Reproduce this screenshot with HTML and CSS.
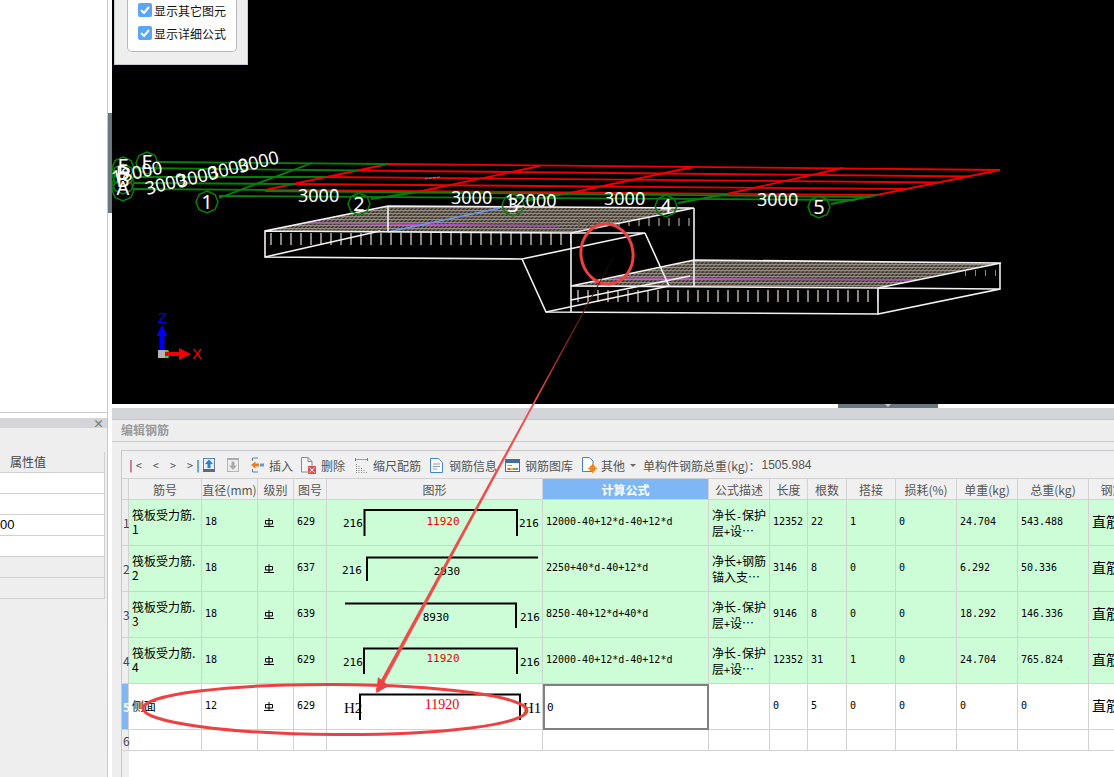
FILE: index.html
```html
<!DOCTYPE html>
<html lang="zh">
<head>
<meta charset="utf-8">
<title>编辑钢筋</title>
<link rel="stylesheet" href="styles.css">
</head>
<body>
<svg class="defs" width="0" height="0">
  <defs>
    <symbol id="rebar" viewBox="0 0 10 10"><path d="M1.500 2.500h7v3.500h-7zM5 0v8.500M0 8.500h10" fill="none" stroke="#000" stroke-width="1"/></symbol>
    <symbol id="bubble" viewBox="-12 -12 24 24"><path d="M0-11 8-7.500 11 0 8 7.500 0 11-8 7.500-11 0-8-7.500Z" fill="none" stroke="#0a800a" stroke-width="1.500"/></symbol>
    <pattern id="mesh" width="4" height="3" patternUnits="userSpaceOnUse" patternTransform="skewX(-40)">
      <rect width="4" height="3" fill="#3a342e"/>
      <path d="M0 .5H4M1 0V3" stroke="#a0968a" stroke-width="1"/>
    </pattern>
    <linearGradient id="fade" gradientUnits="userSpaceOnUse" x1="613" y1="257" x2="534" y2="400">
      <stop offset="0" stop-color="#2a0a0a"/>
      <stop offset=".35" stop-color="#5a1818"/>
      <stop offset=".75" stop-color="#a83030"/>
      <stop offset="1" stop-color="#f04a4a"/>
    </linearGradient>
  </defs>
</svg>

<aside class="left">
  <div class="left-top"></div>
  <section class="props">
    <div class="props-title"><span class="props-close">×</span></div>
    <div class="props-space"></div>
    <div class="props-table">
      <div class="props-head">属性值</div>
      <div class="props-row"></div>
      <div class="props-row"></div>
      <div class="props-row">00</div>
      <div class="props-row"></div>
      <div class="props-row props-row-dim"></div>
      <div class="props-row props-row-dim"></div>
    </div>
  </section>
</aside>

<main class="main">
  <div class="viewport">
    <svg class="scene" width="1002" height="404" viewBox="112 0 1002 404">
      <!-- red plan grid -->
      <g class="g-red">
        <path d="M388 164L1000 170L877 195L265 190Z"/>
        <path d="M357 170.500L970 176.500M326 177L939 182.500M296 184L908 189"/>
        <path d="M540 166L417 192M693 167L570 193M843 168L727 194"/>
      </g>
      <!-- green axis lines -->
      <g class="g-green">
        <path d="M158 162L388 164M134 168L357 170.500M134 177L326 177M134 183L296 184M134 189L265 190"/>
        <path d="M265 191L870 197M219 196L855 200"/>
        <path d="M219 198L312 163M371 199L418 192M525 201L570 193M678 203L727 194M831 204L877 195"/>
      </g>
      <path class="speck" d="M425 179L440 177"/>
      <!-- slabs -->
      <path class="mesh" d="M388 206L694 208L571 233L265 231Z"/>
      <path class="mesh" d="M694 260L1001 263L878 288L571 286Z"/>
      <path class="p-line" d="M305 223L557 226M613 278L913 280"/>
      <path class="b-line" d="M388 232L500 208"/>
      <path class="ticks" d="M270 239H571M577 296H878"/>
      <path class="ticks-side" d="M965 273L998 273"/>
      <path class="ticks-back" d="M578 222L694 222"/>
      <g class="g-white">
        <path d="M265 231L571 233L694 208L388 206L265 231V257L522 259"/>
        <path d="M265 257L380 231M388 206V232"/>
        <path d="M694 208V287M571 233V312"/>
        <path d="M522 259L645 233H571M522 259L546 312L878 314M645 233L669 286"/>
        <path d="M546 312L669 286M571 300L690 276"/>
        <path d="M571 286L694 260L1001 263L878 288Z"/>
        <path d="M878 288V314L1000 289V263M878 288L1000 289"/>
      </g>
      <!-- axis bubbles and dimensions -->
      <use href="#bubble" x="135" y="151" width="24" height="24"/>
      <use href="#bubble" x="111" y="156" width="24" height="24"/>
      <use href="#bubble" x="111" y="163" width="24" height="24"/>
      <use href="#bubble" x="111" y="171" width="24" height="24"/>
      <use href="#bubble" x="111" y="178" width="24" height="24"/>
      <use href="#bubble" x="195" y="190" width="24" height="24"/>
      <use href="#bubble" x="347" y="192" width="24" height="24"/>
      <use href="#bubble" x="501" y="193" width="24" height="24"/>
      <use href="#bubble" x="654" y="194" width="24" height="24"/>
      <use href="#bubble" x="807" y="195" width="24" height="24"/>
      <g class="t-axis">
        <text x="147" y="169">E</text>
        <text x="123" y="173">E</text>
        <text x="123" y="180">D</text>
        <text x="123" y="187">B</text>
        <text x="123" y="195">A</text>
        <text x="207" y="209">1</text>
        <text x="359" y="211">2</text>
        <text x="513" y="212">3</text>
        <text x="666" y="213">4</text>
        <text x="819" y="214">5</text>
      </g>
      <g class="t-dim">
        <text x="298" y="202">3000</text>
        <text x="451" y="204">3000</text>
        <text x="505" y="207">12000</text>
        <text x="604" y="205">3000</text>
        <text x="757" y="206">3000</text>
        <text transform="translate(113 184) rotate(-12)">18000</text>
        <text transform="translate(147 195) rotate(-14)">3000</text>
        <text transform="translate(179 188) rotate(-14)">3000</text>
        <text transform="translate(210 180) rotate(-14)">3000</text>
        <text transform="translate(240 173) rotate(-14)">3000</text>
      </g>
      <!-- axis gizmo -->
      <path class="ax-g" d="M165 350h3l2 3v2l-2 3h-3z"/>
      <rect class="ax-s" x="158" y="350" width="7" height="8"/>
      <path class="ax-z" d="M159.500 350V336H156.500L162 325L167.500 336H164.500V350Z"/>
      <path class="ax-x" d="M165 352H179V348L191 354L179 360V356H165Z"/>
      <text class="ax-zt" x="158" y="323">Z</text>
      <text class="ax-xt" x="192" y="359">X</text>
    </svg>
    <div class="options">
      <div class="options-box">
        <label class="check"><span class="tick"><svg width="10" height="8" viewBox="0 0 10 8"><path d="M1 4L4 7L9 1" fill="none" stroke="#fff" stroke-width="2"/></svg></span>显示其它图元</label>
        <label class="check"><span class="tick"><svg width="10" height="8" viewBox="0 0 10 8"><path d="M1 4L4 7L9 1" fill="none" stroke="#fff" stroke-width="2"/></svg></span>显示详细公式</label>
      </div>
    </div>
    <div class="grip-left"></div>
  </div>

  <div class="strip"><div class="grip-bottom"></div></div>
  <div class="titlebar"></div>
  <div class="panelhead">编辑钢筋</div>

  <div class="workspace">
    <div class="sheet">
      <div class="toolbar">
        <div class="nav"><b class="bar-p">|</b>&lt;<span class="nav-sp">&lt;</span><span class="nav-sp">&gt;</span><span class="nav-sp">&gt;</span><b class="bar-b">|</b></div>
        <svg class="ml11" width="12" height="14" viewBox="0 0 12 14"><rect x=".5" y=".5" width="11" height="13" fill="#e6edf4" stroke="#5d86ad"/><rect y="11" width="12" height="3" fill="#5f6b76"/><path d="M6 1.500L10 6H7.500V10H4.500V6H2Z" fill="#2a7fd0"/></svg>
        <svg class="ml12" width="12" height="14" viewBox="0 0 12 14"><rect x=".5" y=".5" width="11" height="13" fill="#eee" stroke="#b4b4b4"/><rect width="12" height="2" fill="#aaa"/><path d="M6 12L10 7.500H7.500V3.500H4.500V7.500H2Z" fill="#aaa"/></svg>
        <svg class="ml12" width="13" height="16" viewBox="0 0 13 16"><path d="M7 1H1.500V4M1.500 12V15H7" fill="none" stroke="#5a7fa5"/><path d="M0 8L4.500 4.500V6.500H8V9.500H4.500V11.500Z" fill="#e87d22"/><rect x="9" y="6.500" width="4" height="3" fill="#5a9ad8"/></svg>
        <span class="tool-t ml5">插入</span>
        <svg class="ml8" width="15" height="17" viewBox="0 0 15 17"><path d="M.5.500H7L11 4.500V15H.5Z" fill="#f4f4f4" stroke="#8a8a8a"/><path d="M7 .5V4.500H11" fill="none" stroke="#8a8a8a"/><rect x="7" y="9" width="8" height="8" fill="#e05050"/><path d="M8.500 10.500L13.500 15.500M13.500 10.500L8.500 15.500" stroke="#fff"/></svg>
        <span class="tool-t ml5">删除</span>
        <svg class="ml10" width="13" height="15" viewBox="0 0 13 15"><path d="M0 1.500H13" stroke="#e88a3a"/><path d="M.5 0V3M12.500 0V3" stroke="#5a86b0"/><path d="M1.500 15V6M4 15V8M6.500 15V10M9 15V12M11.500 15V13" stroke="#8a8a8a" stroke-dasharray="1 1"/></svg>
        <span class="tool-t ml5">缩尺配筋</span>
        <svg class="ml9" width="13" height="15" viewBox="0 0 13 15"><path d="M.5.500H8.500L12.500 4.500V14.500H.5Z" fill="#fff" stroke="#3f85c8"/><path d="M3 6H10M3 8.500H10M3 11H7" stroke="#8a9aaa"/></svg>
        <span class="tool-t ml6">钢筋信息</span>
        <svg class="ml8" width="15" height="13" viewBox="0 0 15 13"><rect x=".5" y=".5" width="14" height="12" fill="#fff" stroke="#3f6ea5"/><rect x="1" y="1" width="13" height="3" fill="#3f6ea5"/><path d="M2.500 6.500H7" stroke="#8a9aaa"/><path d="M2.500 10H5" stroke="#e05050" stroke-width="2"/><path d="M5 10H8" stroke="#e8b83a" stroke-width="2"/><path d="M8 10H10.500" stroke="#5ab85a" stroke-width="2"/><path d="M10.500 10H13" stroke="#4a8ad8" stroke-width="2"/></svg>
        <span class="tool-t ml5">钢筋图库</span>
        <svg class="ml9" width="15" height="16" viewBox="0 0 15 16"><path d="M.5.500H7.500L11 4V14.500H.5Z" fill="#fff" stroke="#3f85c8"/><circle cx="10.500" cy="11.500" r="3.200" fill="#e8862a"/><circle cx="10.500" cy="11.500" r="1.100" fill="#fff"/><path d="M10.500 7V16M6 11.500H15" stroke="#e8862a"/></svg>
        <span class="tool-t ml4">其他</span>
        <span class="caret"></span>
        <span class="tool-t ml7">单构件钢筋总重(kg)：</span>
        <span class="tool-n">1505.984</span>
      </div>

      <div class="grid-row head">
        <div class="c rn"></div>
        <div class="c">筋号</div>
        <div class="c">直径(mm)</div>
        <div class="c">级别</div>
        <div class="c">图号</div>
        <div class="c">图形</div>
        <div class="c selected">计算公式</div>
        <div class="c">公式描述</div>
        <div class="c">长度</div>
        <div class="c">根数</div>
        <div class="c">搭接</div>
        <div class="c">损耗(%)</div>
        <div class="c">单重(kg)</div>
        <div class="c">总重(kg)</div>
        <div class="c">钢筋类型</div>
      </div>

      <div class="grid-row data green">
        <div class="c rn">1</div>
        <div class="c zh">筏板受力筋.<br>1</div>
        <div class="c">18</div>
        <div class="c sym"><svg width="10" height="10"><use href="#rebar"/></svg></div>
        <div class="c">629</div>
        <div class="c shape"><svg width="215" height="45"><path class="bar" d="M37.500 36V10H190V36"/><text class="s-dim" x="16" y="27">216</text><text class="s-dim" x="192" y="27">216</text><text class="s-red" x="116" y="25">11920</text></svg></div>
        <div class="c">12000-40+12*d-40+12*d</div>
        <div class="c zh">净长<span class="latin">-</span>保护<br>层<span class="latin">+</span>设…</div>
        <div class="c">12352</div>
        <div class="c">22</div>
        <div class="c">1</div>
        <div class="c">0</div>
        <div class="c">24.704</div>
        <div class="c">543.488</div>
        <div class="c kind">直筋</div>
      </div>

      <div class="grid-row data green">
        <div class="c rn">2</div>
        <div class="c zh">筏板受力筋.<br>2</div>
        <div class="c">18</div>
        <div class="c sym"><svg width="10" height="10"><use href="#rebar"/></svg></div>
        <div class="c">637</div>
        <div class="c shape"><svg width="215" height="45"><path class="bar" d="M40 35V11.500H211"/><text class="s-dim" x="15" y="28">216</text><text class="s-mid" x="120" y="29">2930</text></svg></div>
        <div class="c">2250+40*d-40+12*d</div>
        <div class="c zh">净长<span class="latin">+</span>钢筋<br>锚入支…</div>
        <div class="c">3146</div>
        <div class="c">8</div>
        <div class="c">0</div>
        <div class="c">0</div>
        <div class="c">6.292</div>
        <div class="c">50.336</div>
        <div class="c kind">直筋</div>
      </div>

      <div class="grid-row data green">
        <div class="c rn">3</div>
        <div class="c zh">筏板受力筋.<br>3</div>
        <div class="c">18</div>
        <div class="c sym"><svg width="10" height="10"><use href="#rebar"/></svg></div>
        <div class="c">639</div>
        <div class="c shape"><svg width="215" height="45"><path class="bar" d="M18 11.500H189V36"/><text class="s-mid" x="109" y="29">8930</text><text class="s-dim" x="193" y="29">216</text></svg></div>
        <div class="c">8250-40+12*d+40*d</div>
        <div class="c zh">净长<span class="latin">-</span>保护<br>层<span class="latin">+</span>设…</div>
        <div class="c">9146</div>
        <div class="c">8</div>
        <div class="c">0</div>
        <div class="c">0</div>
        <div class="c">18.292</div>
        <div class="c">146.336</div>
        <div class="c kind">直筋</div>
      </div>

      <div class="grid-row data green">
        <div class="c rn">4</div>
        <div class="c zh">筏板受力筋.<br>4</div>
        <div class="c">18</div>
        <div class="c sym"><svg width="10" height="10"><use href="#rebar"/></svg></div>
        <div class="c">629</div>
        <div class="c shape"><svg width="215" height="45"><path class="bar" d="M37 36V10.500H190V36"/><text class="s-dim" x="16" y="28">216</text><text class="s-dim" x="193" y="28">216</text><text class="s-red" x="116" y="24">11920</text></svg></div>
        <div class="c">12000-40+12*d-40+12*d</div>
        <div class="c zh">净长<span class="latin">-</span>保护<br>层<span class="latin">+</span>设…</div>
        <div class="c">12352</div>
        <div class="c">31</div>
        <div class="c">1</div>
        <div class="c">0</div>
        <div class="c">24.704</div>
        <div class="c">765.824</div>
        <div class="c kind">直筋</div>
      </div>

      <div class="grid-row data">
        <div class="c rn current">5</div>
        <div class="c zh zh-single">侧面</div>
        <div class="c">12</div>
        <div class="c sym"><svg width="10" height="10"><use href="#rebar"/></svg></div>
        <div class="c">629</div>
        <div class="c shape"><svg width="215" height="45"><path class="bar" d="M33 36V10.500H193V36"/><text class="s-h" x="17" y="29">H2</text><text class="s-h" x="196" y="29">H1</text><text class="s-red-b" x="115" y="25">11920</text></svg></div>
        <div class="c editing">0</div>
        <div class="c"></div>
        <div class="c">0</div>
        <div class="c">5</div>
        <div class="c">0</div>
        <div class="c">0</div>
        <div class="c">0</div>
        <div class="c">0</div>
        <div class="c kind">直筋</div>
      </div>

      <div class="grid-row empty">
        <div class="c rn">6</div>
        <div class="c"></div><div class="c"></div><div class="c"></div><div class="c"></div>
        <div class="c"></div><div class="c"></div><div class="c"></div><div class="c"></div>
        <div class="c"></div><div class="c"></div><div class="c"></div><div class="c"></div>
        <div class="c"></div><div class="c"></div>
      </div>
      <div class="gutter"></div>
    </div>
  </div>
</main>

<svg class="annotation" width="1114" height="777" viewBox="0 0 1114 777">
  <ellipse class="mark" cx="607" cy="254" rx="26" ry="30" transform="rotate(-8 607 254)"/>
  <path fill="url(#fade)" d="M613 257L613.600 257.300L379 692L375.500 690Z"/>
  <path class="mark-fill" d="M376 693L378 677L389 686Z"/>
  <ellipse class="mark" cx="335" cy="709.500" rx="192" ry="25" transform="rotate(.3 335 709.500)"/>
</svg>
</body>
</html>
```

FILE: styles.css
```css
* { box-sizing: border-box; }

html, body { margin: 0; padding: 0; }

body {
  position: relative;
  display: flex;
  width: 1114px;
  height: 777px;
  overflow: hidden;
  background: #fff;
  font-family: "Noto Sans CJK SC", "Liberation Sans", sans-serif;
  font-size: 12px;
  color: #000;
}

.defs { position: absolute; }

/* left column */
.left {
  display: flex;
  flex-direction: column;
  flex: none;
  width: 108px;
  height: 777px;
  border-right: 1px solid #c6c6c6;
}
.left-top {
  height: 413px;
  background: #fff;
  border-bottom: 1px solid #c6c6c6;
}
.props {
  flex: 1;
  margin-top: 5px;
  background: #eee;
}
.props-title {
  display: flex;
  justify-content: flex-end;
  align-items: center;
  height: 10px;
  padding-right: 3px;
  background: #d3d5d9;
}
.props-close { font-size: 11px; line-height: 10px; color: #777; font-weight: 700; }
.props-space { height: 24px; }
.props-table { width: 105px; border-right: 1px solid #d0d0d0; }
.props-head {
  height: 21px;
  padding-left: 10px;
  border-bottom: 1px solid #d0d0d0;
  font-size: 12px;
  line-height: 20px;
  color: #444;
  background: #eee;
}
.props-row {
  height: 21px;
  border-bottom: 1px solid #d0d0d0;
  background: #fff;
  line-height: 20px;
  font-family: "Liberation Sans", sans-serif;
  font-size: 13px;
}
.props-row-dim { background: #eee; }

/* main column */
.main {
  flex: none;
  width: 1002px;
  margin-left: 4px;
  display: flex;
  flex-direction: column;
  min-height: 0;
}
.viewport {
  position: relative;
  height: 404px;
  background: #000;
}
.scene { display: block; }

.g-red path { fill: none; stroke: #f00000; stroke-width: 1.8; }
.g-green path { fill: none; stroke: #0a800a; stroke-width: 1.8; }
.g-white path { fill: none; stroke: #f2f2f2; stroke-width: 1.6; }
.t-axis text { fill: #fff; font-family: "Noto Sans", sans-serif; font-size: 20px; text-anchor: middle; }
.t-dim text { fill: #fff; font-family: "Noto Sans", sans-serif; font-size: 18px; }
.speck { stroke: #7d93a8; stroke-width: 1; stroke-dasharray: 3 1; }
.mesh { fill: url(#mesh); }
.p-line { fill: none; stroke: #b04ac0; stroke-width: 1.6; }
.b-line { fill: none; stroke: #6f94e8; stroke-width: 1.5; }
.ticks { fill: none; stroke: #8f847a; stroke-width: 12; stroke-dasharray: 2 8; }
.ticks-side { fill: none; stroke: #8f847a; stroke-width: 6; stroke-dasharray: 1 9; }
.ticks-back { fill: none; stroke: #6b625a; stroke-width: 8; stroke-dasharray: 2 8; }
.ax-g { fill: #28e028; }
.ax-s { fill: #b4b4b4; }
.ax-z { fill: #0000f0; }
.ax-x { fill: #f00000; }
.ax-zt, .ax-xt { font-family: "Liberation Sans", sans-serif; font-size: 15px; }
.ax-zt { fill: #0000f0; }
.ax-xt { fill: #f00000; }

.options {
  position: absolute;
  left: 2px;
  top: 0;
  width: 134px;
  height: 65px;
  padding: 0 12px;
  background: #eee;
  border: 1px solid #c8ccd6;
  border-top: 0;
}
.options-box {
  width: 110px;
  height: 52px;
  padding: 1px 0 0 10px;
  background: #fff;
  border: 1px solid #b8b8b8;
  border-top: 0;
  border-radius: 0 0 5px 5px;
  display: flex;
  flex-direction: column;
  gap: 5px;
}
.check {
  display: flex;
  align-items: center;
  height: 18px;
  color: #111;
  white-space: nowrap;
}
.tick {
  display: flex;
  align-items: center;
  justify-content: center;
  width: 14px;
  height: 14px;
  margin-right: 2px;
  border-radius: 2px;
  background: #5aa6f6;
}
.grip-left {
  position: absolute;
  left: -4px;
  top: 113px;
  width: 4px;
  height: 100px;
  background: #6b7680;
}

.strip {
  position: relative;
  flex: none;
  height: 4px;
  background: #fff;
}
.grip-bottom {
  position: absolute;
  left: 726px;
  top: 0;
  width: 100px;
  height: 4px;
  background: #6b7680;
}
.grip-bottom::after {
  content: "";
  position: absolute;
  left: 47px;
  top: 0;
  border-left: 3px solid transparent;
  border-right: 3px solid transparent;
  border-top: 3px solid #c8ccd0;
}
.titlebar {
  flex: none;
  height: 12px;
  background: #d3d5d9;
  border-bottom: 1px solid #c6c6c6;
}
.panelhead {
  flex: none;
  height: 22px;
  padding-left: 9px;
  background: #eee;
  border-bottom: 1px solid #c6c8cc;
  font-size: 12px;
  font-weight: 700;
  line-height: 20px;
  color: #9a9a9a;
}
.workspace {
  flex: 1;
  min-height: 0;
  padding: 8px 0 0 9px;
  background: #eee;
  overflow: hidden;
}
.sheet {
  display: flex;
  flex-direction: column;
  width: 1100px;
  height: 100%;
  background: #fff;
  border-top: 1px solid #c6c8cc;
  border-left: 1px solid #c6c8cc;
}
.gutter {
  flex: 1;
  width: 7px;
  background: #eee;
}

/* toolbar */
.toolbar {
  display: flex;
  flex: none;
  align-items: center;
  height: 28px;
  padding: 1px 0 0 5px;
  background: #f0f0f0;
  border-bottom: 1px solid #d0d0d0;
  white-space: nowrap;
}
.toolbar svg { flex: none; }
.nav {
  display: flex;
  align-items: center;
  width: 65px;
  font-family: "DejaVu Sans Mono", monospace;
  font-size: 10px;
  color: #555;
}
.bar-p { color: #7a3a8a; font-weight: 400; font-size: 13px; margin-right: 1px; }
.bar-b { color: #2b6cb0; font-weight: 400; font-size: 13px; margin-left: 1px; }
.nav-sp { margin-left: 11px; }
.tool-t { color: #555; }
.tool-n { color: #555; margin-left: 1px; font-family: "Liberation Sans", sans-serif; }
.caret {
  width: 0;
  height: 0;
  margin-left: 5px;
  border-left: 3px solid transparent;
  border-right: 3px solid transparent;
  border-top: 3px solid #666;
}
.ml4 { margin-left: 4px; }
.ml5 { margin-left: 5px; }
.ml6 { margin-left: 6px; }
.ml7 { margin-left: 7px; }
.ml8 { margin-left: 8px; }
.ml9 { margin-left: 9px; }
.ml10 { margin-left: 10px; }
.ml11 { margin-left: 11px; }
.ml12 { margin-left: 12px; }

/* grid */
.grid-row {
  display: grid;
  flex: none;
  grid-template-columns: 7px 73px 56px 36px 33px 216px 166px 61px 38px 39px 49px 61px 61px 71px 72px;
}
.head { height: 21px; background: #f0f0f0; }
.data { height: 46px; background: #fff; }
.green { background: #ccfdd6; }
.empty { height: 21px; }
.c {
  display: flex;
  align-items: center;
  min-width: 0;
  padding: 0 0 2px 3px;
  border-right: 1px solid #d2d2d2;
  border-bottom: 1px solid #d2d2d2;
  font-family: "DejaVu Sans Mono", monospace;
  font-size: 10px;
  white-space: nowrap;
  overflow: hidden;
}
.head .c {
  justify-content: center;
  padding: 0;
  font-family: "Noto Sans CJK SC", sans-serif;
  font-size: 12px;
  color: #555;
}
.head .selected {
  background: #7fb7f6;
  color: #fff;
  font-weight: 700;
}
.rn {
  padding: 0 0 0 1px;
  background: #eee;
  font-family: "Noto Sans CJK SC", sans-serif;
  font-size: 12px;
  color: #445;
  overflow: visible;
}
.current {
  background: #7fb7f6;
  color: #fff;
  font-weight: 700;
}
.zh {
  display: block;
  align-self: stretch;
  padding: 8px 0 0 3px;
  font-family: "Noto Sans CJK SC", sans-serif;
  font-size: 12px;
  line-height: 14px;
  overflow: hidden;
}
.zh-single { padding-top: 15px; }
.latin { font-family: "DejaVu Sans Mono", monospace; font-size: 10px; }
.kind {
  padding: 0 0 4px 3px;
  font-family: "Noto Sans CJK SC", sans-serif;
  font-size: 14px;
}
.sym { padding: 0 0 0 6px; }
.shape { padding: 0; align-items: flex-start; }
.bar { fill: none; stroke: #000; stroke-width: 2; }
.s-dim, .s-mid, .s-red {
  font-family: "DejaVu Sans Mono", monospace;
  font-size: 11px;
  fill: #000;
}
.s-mid, .s-red { text-anchor: middle; }
.s-red { fill: #f00000; }
.s-red-b {
  font-family: "Liberation Serif", serif;
  font-size: 14px;
  fill: #f00000;
  text-anchor: middle;
}
.s-h { font-family: "Liberation Serif", serif; font-size: 15px; fill: #000; }
.editing { border: 2px solid #808080; padding: 0 0 0 2px; background: #fff; font-size: 11px; }

/* hand-drawn mark-up over the screenshot */
.annotation {
  position: absolute;
  left: 0;
  top: 0;
  pointer-events: none;
}
.mark { fill: none; stroke: #ee4040; stroke-width: 3; }
.mark-fill { fill: #ee4040; }
```
